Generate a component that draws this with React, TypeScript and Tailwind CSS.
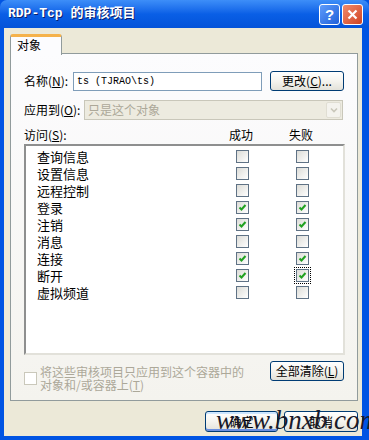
import React, { useState } from 'react';

const FONT = "font-['Noto_Sans_CJK_SC',sans-serif]";

const ROWS: { name: string; ok: boolean; fail: boolean }[] = [
  { name: '查询信息', ok: false, fail: false },
  { name: '设置信息', ok: false, fail: false },
  { name: '远程控制', ok: false, fail: false },
  { name: '登录', ok: true, fail: true },
  { name: '注销', ok: true, fail: true },
  { name: '消息', ok: false, fail: false },
  { name: '连接', ok: true, fail: true },
  { name: '断开', ok: true, fail: true },
  { name: '虚拟频道', ok: false, fail: false },
];

function CheckBox({ checked, focused, onClick }: { checked: boolean; focused?: boolean; onClick?: () => void }) {
  return (
    <span
      onClick={onClick}
      className={`flex items-center justify-center w-[15px] h-[15px] ${focused ? 'outline outline-1 outline-dotted outline-black' : ''}`}
    >
      <span className="flex items-center justify-center w-[13px] h-[13px] border border-[#5f7285] bg-gradient-to-br from-[#DCDCD7] to-white">
        {checked && (
          <svg width="9" height="9" viewBox="0 0 9 9">
            <polyline points="1.5,4.5 3.5,6.5 7.5,2" fill="none" stroke="#21A121" strokeWidth="2" />
          </svg>
        )}
      </span>
    </span>
  );
}

function XpButton({ children, className = '' }: { children: React.ReactNode; className?: string }) {
  return (
    <button
      className={`h-[20px] rounded-[3px] border border-[#003C74] bg-gradient-to-b from-white via-[#F5F4EF] to-[#E3E2DA] text-[12px] leading-[16px] text-black ${className}`}
    >
      {children}
    </button>
  );
}

export default function App() {
  const [rows, setRows] = useState(ROWS);

  const toggle = (i: number, key: 'ok' | 'fail') => {
    setRows(prev => prev.map((r, j) => (j === i ? { ...r, [key]: !r[key] } : r)));
  };

  return (
    <div className={`relative w-[369px] h-[440px] overflow-hidden bg-[#0054E3] flex flex-col ${FONT}`}>
      {/* Title bar */}
      <div className="h-[28px] flex items-center pl-[8px] pr-[6px] rounded-t-[7px] bg-gradient-to-b from-[#3D8EF8] via-[#0A5FE6] to-[#0453D9]">
        <span className="flex-1 text-white font-bold text-[13px] leading-[16px] font-['Liberation_Mono','Noto_Sans_CJK_SC',monospace] [text-shadow:1px_1px_0_#0A1E6E]">
          RDP-Tcp 的审核项目
        </span>
        <div className="flex gap-[2px]">
          <div className="w-[21px] h-[21px] rounded-[3px] border border-white bg-gradient-to-br from-[#5E9CFB] to-[#1F5FD9] flex items-center justify-center text-white font-bold text-[15px] leading-none font-['Liberation_Sans',sans-serif]">
            ?
          </div>
          <div className="w-[21px] h-[21px] rounded-[3px] border border-white bg-gradient-to-br from-[#F08A6C] to-[#D0421F] flex items-center justify-center">
            <svg width="11" height="11" viewBox="0 0 11 11">
              <path d="M1.5 1.5 L9.5 9.5 M9.5 1.5 L1.5 9.5" stroke="white" strokeWidth="2.2" />
            </svg>
          </div>
        </div>
      </div>

      {/* Body */}
      <div className="flex-1 ml-[4px] mr-[7px] mb-[4px] bg-[#ECE9D8] flex flex-col pt-[6px] px-[6px]">
        {/* Tab strip */}
        <div className="flex h-[20px] -mb-px relative z-10">
          <div className="w-[52px] h-[21px] border border-b-0 border-[#919B9C] border-t-[3px] border-t-[#F5B24B] rounded-t-[3px] bg-[#FCFCFE] pl-[6px] text-[12px] leading-[16px] text-black">
            对象
          </div>
        </div>

        {/* Tab panel */}
        <div className="h-[348px] w-[348px] border border-[#919B9C] bg-gradient-to-b from-[#FCFCFE] to-[#F4F3EE] flex flex-col pt-[17px] pl-[13px] pr-[13px] text-[12px] text-black">
          {/* Name row */}
          <div className="flex items-center h-[20px]">
            <span className="w-[49px] leading-[16px]">
              名称(<u>N</u>):
            </span>
            <div className="w-[189px] h-[19px] border border-[#7F9DB9] bg-white flex items-center pl-[3px] text-[10px] font-['Liberation_Mono',monospace]">
              ts (TJRAO\ts)
            </div>
            <XpButton className="ml-[8px] w-[74px]">
              更改(<u>C</u>)...
            </XpButton>
          </div>

          {/* Apply row */}
          <div className="flex items-center h-[20px] mt-[9px]">
            <span className="w-[60px] leading-[16px]">
              应用到(<u>O</u>):
            </span>
            <div className="w-[259px] h-[20px] border border-[#C9C7BA] bg-[#EDEBE0] flex items-center">
              <span className="flex-1 pl-[3px] text-[#ACA899] leading-[16px]">只是这个对象</span>
              <div className="w-[15px] h-[16px] mr-[1px] rounded-[2px] bg-[#F4F3EE] border border-[#E0DED3] flex items-center justify-center">
                <svg width="8" height="6" viewBox="0 0 8 6">
                  <polyline points="1,1.5 4,4.5 7,1.5" fill="none" stroke="#C9C7BA" strokeWidth="1.6" />
                </svg>
              </div>
            </div>
          </div>

          {/* Header */}
          <div className="flex items-center h-[18px] mt-[6px] pr-[13px]">
            <span className="flex-1 leading-[16px]">
              访问(<u>S</u>):
            </span>
            <span className="w-[60px] text-center leading-[16px]">成功</span>
            <span className="w-[60px] text-center leading-[16px]">失败</span>
          </div>

          {/* List */}
          <div className="h-[211px] w-[321px] border-2 border-t-[#8E8F8F] border-l-[#8E8F8F] border-r-[#E2E1DA] border-b-[#E2E1DA] bg-white pt-[2px] pl-[11px] pr-[11px]">
            {rows.map((r, i) => (
              <div key={r.name} className="flex items-center h-[17px]">
                <span className="flex-1 text-[13px] leading-[16px]">{r.name}</span>
                <span className="w-[60px] flex justify-center">
                  <CheckBox checked={r.ok} onClick={() => toggle(i, 'ok')} />
                </span>
                <span className="w-[60px] flex justify-center">
                  <CheckBox checked={r.fail} focused={i === 7} onClick={() => toggle(i, 'fail')} />
                </span>
              </div>
            ))}
          </div>

          {/* Bottom row */}
          <div className="flex items-start mt-[6px]">
            <div className="flex-1 flex items-center gap-[3px] pt-[4px]">
              <span className="w-[13px] h-[13px] border border-[#CAC8BB] bg-white shrink-0" />
              <span className="text-[#ACA899] text-[12px] leading-[13px]">
                将这些审核项目只应用到这个容器中的
                <br />
                对象和/或容器上(<u>T</u>)
              </span>
            </div>
            <XpButton className="w-[74px]">
              全部清除(<u>L</u>)
            </XpButton>
          </div>
        </div>

        {/* Dialog buttons */}
        <div className="flex justify-end gap-[6px] mt-[10px] w-[348px]">
          <XpButton className="w-[73px] h-[21px] shadow-[inset_0_-2px_0_#6A8FE0,inset_0_2px_0_#CEE7FF]">确定</XpButton>
          <XpButton className="w-[74px] h-[21px]">取消</XpButton>
        </div>
      </div>

      {/* Watermark */}
      <span className="absolute left-[216px] top-[405px] text-[27px] leading-[30px] italic text-[#1A1A2A] font-['Liberation_Serif',serif] whitespace-nowrap">
        www.bnxb.com
      </span>
    </div>
  );
}
